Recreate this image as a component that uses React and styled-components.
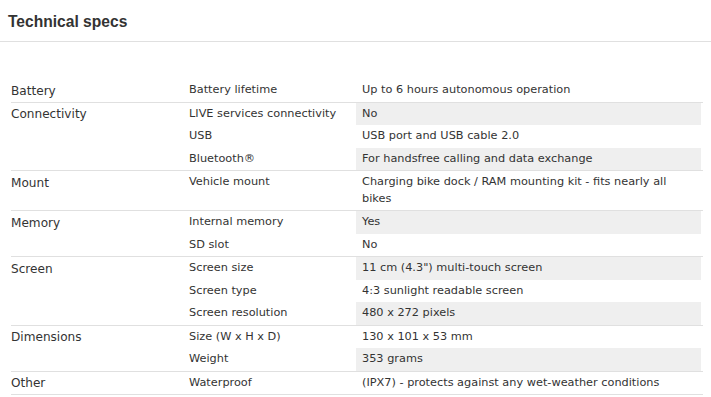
import React from "react";
import styled, { createGlobalStyle } from "styled-components";

const Global = createGlobalStyle`
  html, body { margin: 0; padding: 0; background: #fff; }
  body { font-family: "DejaVu Sans", Verdana, sans-serif; color: #333; }
`;

const Header = styled.div`
  padding: 12px 8px 9px;
  border-bottom: 1px solid #e0e0e0;
`;

const Title = styled.h2`
  margin: 0;
  font-family: "Liberation Sans", Arial, sans-serif;
  font-weight: bold;
  font-size: 15.6px;
  line-height: 20px;
  color: #333;
`;

const Table = styled.div`
  margin: 37px 8px 0 11px;
`;

const Group = styled.div`
  display: grid;
  grid-template-columns: 178px 167px 345px 1fr;
  border-bottom: 1px solid #e0e0e0;
`;

const Category = styled.div`
  grid-column: 1;
  grid-row: 1 / span ${(p) => p.$span};
  font-size: 12.1px;
  line-height: 16.5px;
  padding: 3.5px 0 0;
  color: #333;
`;

const Label = styled.div`
  grid-column: 2;
  font-size: 11.3px;
  line-height: 16.5px;
  padding: 3px 0;
  color: #333;
`;

const Value = styled.div`
  grid-column: 3;
  font-size: 11.3px;
  line-height: 16.5px;
  padding: 3px 6px;
  color: #333;
  background: ${(p) => (p.$shade ? "#efefef" : "transparent")};
`;

const specs = [
  ["Battery", [["Battery lifetime", "Up to 6 hours autonomous operation"]]],
  [
    "Connectivity",
    [
      ["LIVE services connectivity", "No"],
      ["USB", "USB port and USB cable 2.0"],
      ["Bluetooth®", "For handsfree calling and data exchange"],
    ],
  ],
  ["Mount", [["Vehicle mount", "Charging bike dock / RAM mounting kit - fits nearly all bikes"]]],
  [
    "Memory",
    [
      ["Internal memory", "Yes"],
      ["SD slot", "No"],
    ],
  ],
  [
    "Screen",
    [
      ["Screen size", "11 cm (4.3\") multi-touch screen"],
      ["Screen type", "4:3 sunlight readable screen"],
      ["Screen resolution", "480 x 272 pixels"],
    ],
  ],
  [
    "Dimensions",
    [
      ["Size (W x H x D)", "130 x 101 x 53 mm"],
      ["Weight", "353 grams"],
    ],
  ],
  ["Other", [["Waterproof", "(IPX7) - protects against any wet-weather conditions"]]],
];

export default function App() {
  let idx = 0;
  return (
    <>
      <Global />
      <Header>
        <Title>Technical specs</Title>
      </Header>
      <Table>
        {specs.map(([cat, rows]) => (
          <Group key={cat}>
            <Category $span={rows.length}>{cat}</Category>
            {rows.map(([label, value]) => {
              const shade = idx % 2 === 1;
              idx += 1;
              return (
                <React.Fragment key={label}>
                  <Label>{label}</Label>
                  <Value $shade={shade}>{value}</Value>
                </React.Fragment>
              );
            })}
          </Group>
        ))}
      </Table>
    </>
  );
}
